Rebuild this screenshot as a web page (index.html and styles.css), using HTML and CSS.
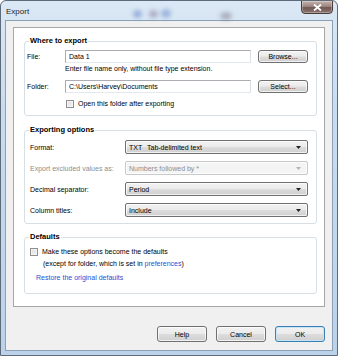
FILE: index.html
```html
<!DOCTYPE html>
<html lang="en">
<head>
    <meta charset="UTF-8">
    <meta name="viewport" content="width=device-width, initial-scale=1.0">
    <title>Export</title>
    <link rel="stylesheet" href="styles.css">
</head>
<body>
    <div class="window">
        <div class="glass-spot spot-a"></div>
        <div class="glass-spot spot-b"></div>
        <div class="glass-spot spot-c"></div>
        <div class="glass-spot spot-d"></div>

        <div class="titlebar">
            <span class="title">Export</span>
            <button class="close-btn">
                <svg width="9" height="7" viewBox="0 0 9 7">
                    <path d="M1 0.5 L8 6.5 M8 0.5 L1 6.5" stroke="#fff" stroke-width="1.8"/>
                </svg>
            </button>
        </div>

        <div class="client">
            <div class="panel">
                <fieldset class="group group-where">
                    <legend>Where to export</legend>
                    <div class="where-grid">
                        <label class="lbl">File:</label>
                        <input class="field" type="text" value="Data 1">
                        <button class="btn small">Browse...</button>

                        <span class="hint">Enter file name only, without file type extension.</span>

                        <label class="lbl">Folder:</label>
                        <input class="field" type="text" value="C:\Users\Harvey\Documents">
                        <button class="btn small">Select...</button>

                        <div class="check-row open-row">
                            <span class="check"></span>
                            <span>Open this folder after exporting</span>
                        </div>
                    </div>
                </fieldset>

                <fieldset class="group group-options">
                    <legend>Exporting options</legend>
                    <div class="options-grid">
                        <span class="lbl">Format:</span>
                        <div class="combo">
                            <span class="combo-text"><span class="fmt">TXT</span>Tab-delimited text</span>
                            <svg class="arrow" width="5" height="3" viewBox="0 0 5 3"><path d="M0 0 H5 L2.5 3 Z" fill="#222"/></svg>
                        </div>

                        <span class="lbl disabled">Export excluded values as:</span>
                        <div class="combo is-disabled">
                            <span class="combo-text">Numbers followed by *</span>
                            <svg class="arrow" width="5" height="3" viewBox="0 0 5 3"><path d="M0 0 H5 L2.5 3 Z" fill="#b4b4b4"/></svg>
                        </div>

                        <span class="lbl">Decimal separator:</span>
                        <div class="combo">
                            <span class="combo-text">Period</span>
                            <svg class="arrow" width="5" height="3" viewBox="0 0 5 3"><path d="M0 0 H5 L2.5 3 Z" fill="#222"/></svg>
                        </div>

                        <span class="lbl">Column titles:</span>
                        <div class="combo">
                            <span class="combo-text">Include</span>
                            <svg class="arrow" width="5" height="3" viewBox="0 0 5 3"><path d="M0 0 H5 L2.5 3 Z" fill="#222"/></svg>
                        </div>
                    </div>
                </fieldset>

                <fieldset class="group group-defaults">
                    <legend>Defaults</legend>
                    <div class="check-row">
                        <span class="check"></span>
                        <span>Make these options become the defaults</span>
                    </div>
                    <div class="defaults-note">(except for folder, which is set in <a href="#">preferences</a>)</div>
                    <a class="restore" href="#">Restore the original defaults</a>
                </fieldset>
            </div>

            <div class="actions">
                <button class="btn">Help</button>
                <button class="btn">Cancel</button>
                <button class="btn default">OK</button>
            </div>
        </div>
    </div>
</body>
</html>
```

FILE: styles.css
```css
body {
    margin: 0;
    font-family: "Liberation Sans", Arial, sans-serif;
    font-size: 7px;
    color: #000;
}
.window {
    position: relative;
    box-sizing: border-box;
    width: 338px;
    height: 356px;
    padding: 0 4px 4px 4px;
    border: 1px solid #5d6b7a;
    border-radius: 6px 6px 0 0;
    background: linear-gradient(180deg, #dbe8f5 0%, #c9dcef 30%, #bcd2ea 100%);
    display: flex;
    flex-direction: column;
    overflow: hidden;
}
.glass-spot {
    position: absolute;
    border-radius: 50%;
    filter: blur(2px);
}
.spot-a {
    left: 132px;
    top: 9px;
    width: 9px;
    height: 8px;
    background: rgba(70, 110, 190, 0.45);
}
.spot-b {
    left: 148px;
    top: 9px;
    width: 9px;
    height: 8px;
    background: rgba(110, 90, 130, 0.4);
}
.spot-c {
    left: 160px;
    top: 8px;
    width: 10px;
    height: 9px;
    background: rgba(70, 110, 190, 0.4);
}
.spot-d {
    left: 219px;
    top: 11px;
    width: 12px;
    height: 8px;
    background: rgba(90, 80, 90, 0.35);
}
.titlebar {
    position: relative;
    height: 19px;
    display: flex;
    justify-content: space-between;
    align-items: flex-start;
}
.title {
    margin: 6px 0 0 1px;
    font-size: 8px;
    color: #1e1e1e;
}
.close-btn {
    width: 32px;
    height: 14px;
    margin-top: -1px;
    padding: 0;
    border: 1px solid #4a3a38;
    border-radius: 0 0 4px 4px;
    background: linear-gradient(180deg, #c6b3ae 0%, #9c8580 45%, #6f5752 55%, #8c7470 100%);
    box-shadow: inset 0 0 0 1px rgba(255, 255, 255, 0.3);
    display: flex;
    align-items: center;
    justify-content: center;
}
.client {
    flex: 1;
    background: #f0f0f0;
    border: 1px solid #8ba0b9;
    padding: 6px 7px 8px 7px;
    display: flex;
    flex-direction: column;
}
.panel {
    background: #fff;
    border: 1px solid #a6a6a6;
    padding: 8px 7px 15px 10px;
    height: 280px;
    box-sizing: border-box;
}
.group {
    margin: 0;
    border: 1px solid #d5dfe5;
    border-radius: 3px;
    min-inline-size: 0;
}
.group legend {
    font-weight: bold;
    font-size: 7.5px;
    line-height: 10px;
    padding: 0 1px;
}
.group-where {
    padding: 4px 8px 0 2px;
}
.group-where legend {
    margin-left: 2px;
}
.group-options {
    margin-top: 9px;
    padding: 5px 8px 6px 5px;
}
.group-options legend {
    margin-left: -1px;
}
.group-defaults {
    margin-top: 8px;
    padding: 4px 8px 9px 5px;
}
.group-defaults legend {
    margin-left: -1px;
}
.where-grid {
    display: grid;
    grid-template-columns: 31px 1fr 50px;
    grid-template-rows: 13px 17px 13px 22px;
    column-gap: 7px;
    align-items: center;
}
.hint {
    grid-column: 2 / 4;
    align-self: start;
    line-height: 12px;
}
.open-row {
    grid-column: 2 / 4;
    margin-left: 1px;
}
.field {
    box-sizing: border-box;
    height: 13px;
    margin: 0;
    padding: 0 3px;
    border: 1px solid #abadb3;
    border-right-color: #dbdfe6;
    border-bottom-color: #e3e9ef;
    font-family: inherit;
    font-size: 7px;
    color: #000;
    outline: none;
}
.btn {
    box-sizing: border-box;
    width: 50px;
    height: 16px;
    padding: 0;
    border: 1px solid #707070;
    border-radius: 3px;
    background: linear-gradient(180deg, #f2f2f2 0%, #ebebeb 49%, #dddddd 51%, #cfcfcf 100%);
    box-shadow: inset 0 0 0 1px rgba(255, 255, 255, 0.7);
    font-family: inherit;
    font-size: 7px;
    color: #000;
}
.btn.small {
    height: 13px;
}
.btn.default {
    border-color: #3c7fb1;
    box-shadow: inset 0 0 0 1px #c6e4f7;
}
.options-grid {
    display: grid;
    grid-template-columns: 95px 1fr;
    grid-auto-rows: 14px;
    row-gap: 7px;
    align-items: center;
}
.lbl {
    white-space: nowrap;
}
.lbl.disabled {
    color: #8d8d8d;
}
.combo {
    box-sizing: border-box;
    height: 14px;
    border: 1px solid #707070;
    border-radius: 2px;
    background: linear-gradient(180deg, #f2f2f2 0%, #ebebeb 49%, #dddddd 51%, #cfcfcf 100%);
    box-shadow: inset 0 0 0 1px rgba(255, 255, 255, 0.7);
    display: flex;
    align-items: center;
    justify-content: space-between;
    padding: 0 6px 0 3px;
}
.combo.is-disabled {
    border-color: #c9c9c9;
    background: #f4f4f4;
    color: #8d8d8d;
}
.fmt {
    display: inline-block;
    width: 18px;
}
.check-row {
    display: flex;
    align-items: center;
    gap: 4px;
    line-height: 12px;
}
.check {
    box-sizing: border-box;
    width: 8px;
    height: 8px;
    border: 1px solid #8f8f8f;
    background: linear-gradient(135deg, #dcdcdc 0%, #f6f6f6 100%);
    box-shadow: inset 0 0 0 1px #f4f4f4;
}
.defaults-note {
    margin-left: 13px;
    line-height: 12px;
}
a {
    color: #2352d8;
    text-decoration: none;
}
.restore {
    display: block;
    margin: 2px 0 0 6px;
    line-height: 12px;
}
.actions {
    margin-top: auto;
    display: flex;
    justify-content: flex-end;
    gap: 9px;
}
```
